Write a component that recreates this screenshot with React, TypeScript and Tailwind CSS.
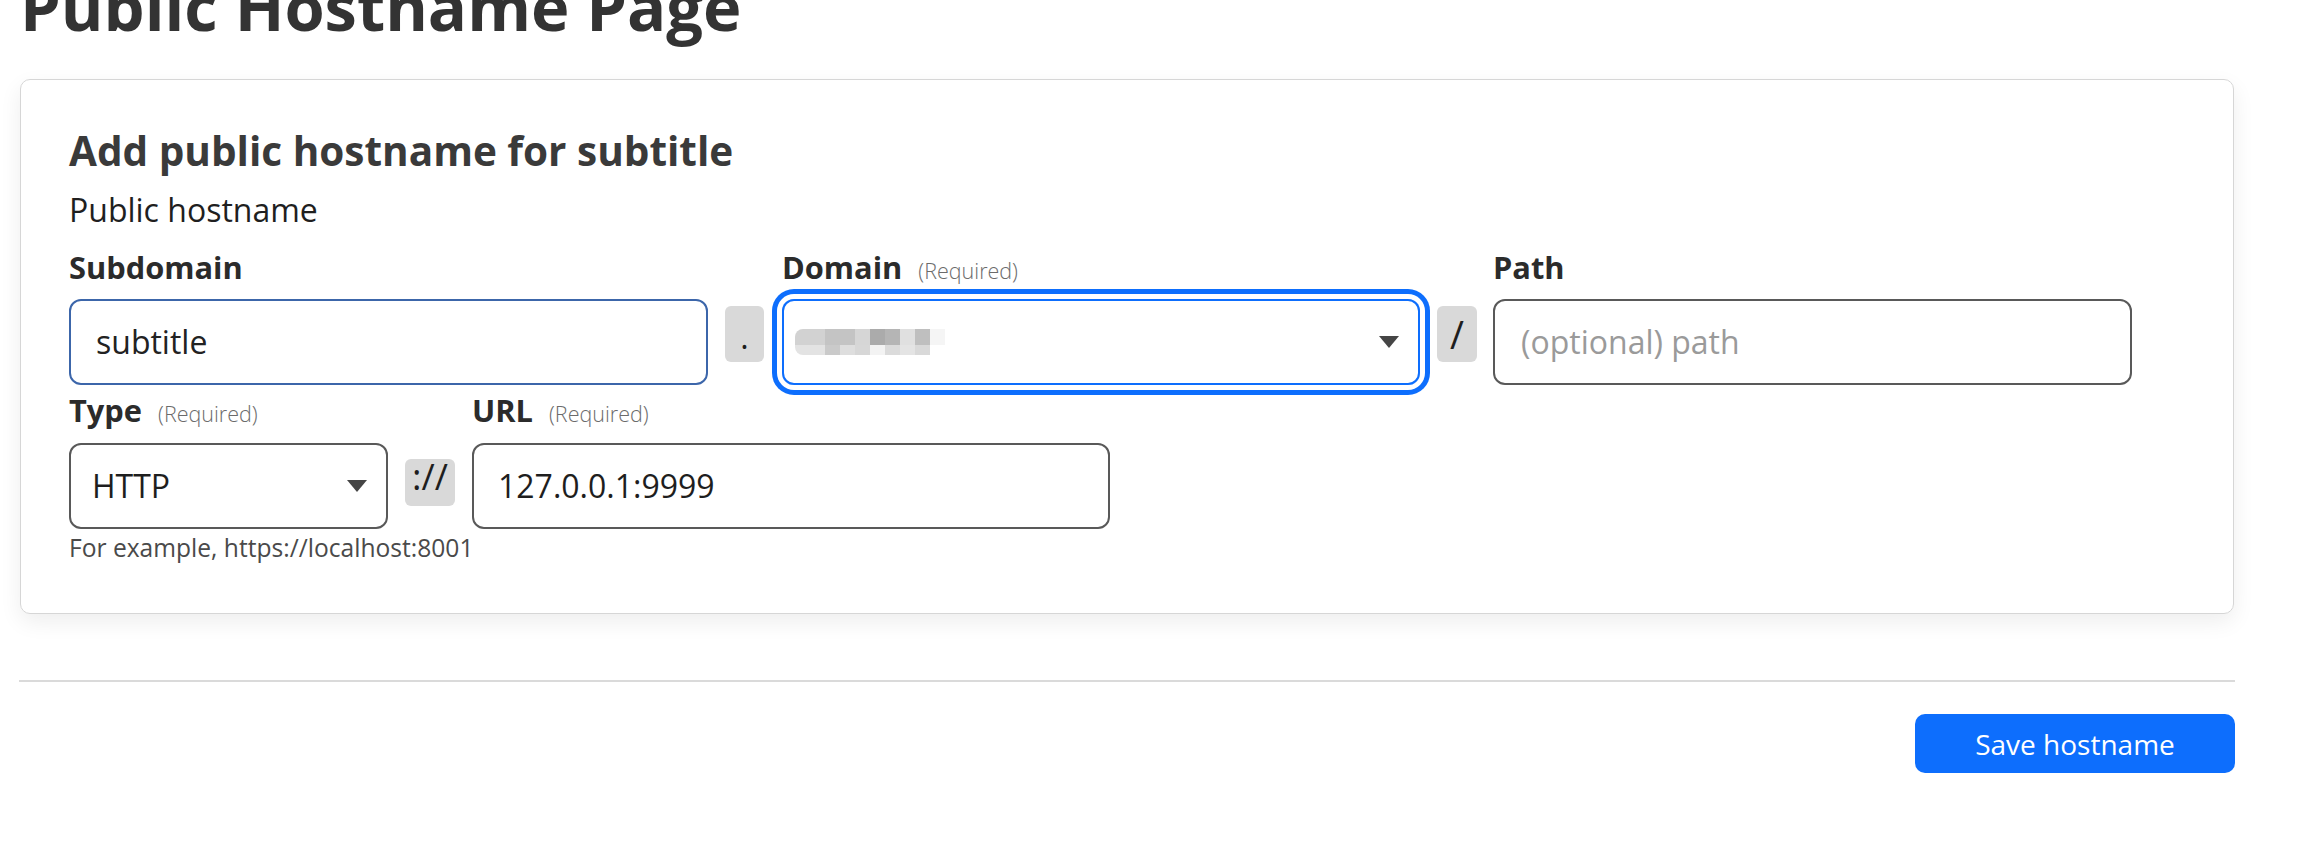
import React from "react";

// Hostname form — card with subdomain/domain/path row, type/url row, footer button

const caret = (
  <svg width="20" height="12" viewBox="0 0 20 12" className="shrink-0">
    <polygon points="0,0 20,0 10,12" fill="#454545" />
  </svg>
);

const mosaicTop = ["#d2d2d2", "#d2d2d2", "#c4c4c4", "#c4c4c4", "#d6d6d6", "#ababab", "#b5b5b5", "#e0e0e0", "#bfbfbf", "#f5f5f5"];
const mosaicBottom = ["#e3e3e3", "#e3e3e3", "#cacaca", "#dedede", "#d7d7d7", "#f3f3f3", "#dbdbdb", "#e4e4e4", "#d9d9d9"];

function Label({ text, required }: { text: string; required?: boolean }) {
  return (
    <div className="h-[44px] leading-[44px] whitespace-nowrap">
      <span className="text-[30.8px] font-bold text-[#2b2b2b]">{text}</span>
      {required && <span className="ml-4 text-[21.5px] font-light text-[#6b6b6b]">(Required)</span>}
    </div>
  );
}

function Sep({ children, className }: { children: React.ReactNode; className: string }) {
  return (
    <div className={"flex justify-center rounded-[6px] bg-[#d9d9d9] text-[#1e1e1e] " + className}>{children}</div>
  );
}

export default function App() {
  return (
    <div className="min-h-screen overflow-hidden bg-white font-['Open_Sans','Noto_Sans',sans-serif] text-[#212529]">
      <div className="ml-[20px] flex w-[2215px] flex-col">
        <h1 className="-mt-[26px] text-[65px] font-bold leading-[65px] text-[#333333]">Public Hostname Page</h1>

        <div className="mt-[40px] w-[2214px] rounded-[10px] border border-[#d6d6d6] px-[48px] pb-[49px] pt-[47px] shadow-[0_8px_22px_rgba(0,0,0,0.07)]">
          <h2 className="text-[40.5px] font-bold leading-[48px] text-[#3a3a3a]">Add public hostname for subtitle</h2>
          <div className="mt-[13px] text-[32px] leading-[44px] text-[#1f1f1f]">Public hostname</div>

          {/* hostname row */}
          <div className="mt-[13px] flex items-end">
            <div className="flex w-[639px] flex-col">
              <Label text="Subdomain" />
              <div className="mt-[10px] flex h-[86px] items-center rounded-[12px] border-2 border-[#3c66aa] pl-[25px] text-[32px] text-[#222]">
                subtitle
              </div>
            </div>
            <Sep className="mb-[23px] ml-[17px] mr-[18px] h-[56px] w-[39px] items-center text-[32px] leading-[56px]">
              <span className="pt-[6px]">.</span>
            </Sep>
            <div className="flex w-[638px] flex-col">
              <Label text="Domain" required />
              <div className="mt-[10px] flex h-[86px] items-center justify-between rounded-[12px] border-2 border-[#0d6efd] pl-[11px] pr-[19px] shadow-[0_0_0_5px_#fff,0_0_0_10px_#0d6efd]">
                <div className="flex flex-col">
                  <div className="flex">
                    {mosaicTop.map((c, i) => (
                      <div key={i} className={"h-[16px] w-[15px] " + (i === 0 ? "rounded-tl-[8px]" : "")} style={{ backgroundColor: c }} />
                    ))}
                  </div>
                  <div className="flex">
                    {mosaicBottom.map((c, i) => (
                      <div key={i} className={"h-[10px] w-[15px] " + (i === 0 ? "rounded-bl-[8px]" : "")} style={{ backgroundColor: c }} />
                    ))}
                  </div>
                </div>
                {caret}
              </div>
            </div>
            <Sep className="mb-[23px] ml-[17px] mr-[16px] h-[56px] w-[40px] items-center text-[38px] leading-[56px]">
              /
            </Sep>
            <div className="flex w-[639px] flex-col">
              <Label text="Path" />
              <div className="mt-[10px] flex h-[86px] items-center rounded-[12px] border-2 border-[#595959] pl-[26px] text-[32px] text-[#9a9a9a]">
                (optional) path
              </div>
            </div>
          </div>

          {/* service row */}
          <div className="mt-[3px] flex items-end">
            <div className="flex w-[319px] flex-col">
              <Label text="Type" required />
              <div className="mt-[11px] flex h-[86px] items-center justify-between rounded-[12px] border-2 border-[#595959] pl-[21px] pr-[19px] text-[32px] text-[#1e1e1e]">
                HTTP
                {caret}
              </div>
            </div>
            <Sep className="mx-[17px] mb-[23px] h-[47px] w-[50px] items-start pt-[1px] text-[36px] leading-[34px]">
              ://
            </Sep>
            <div className="flex w-[638px] flex-col">
              <Label text="URL" required />
              <div className="mt-[11px] flex h-[86px] items-center rounded-[12px] border-2 border-[#595959] pl-[24px] text-[32px] text-[#1e1e1e]">
                127.0.0.1:9999
              </div>
            </div>
          </div>
          <div className="mt-[3px] text-[24.6px] leading-[32px] text-[#4a4a4a]">For example, https://localhost:8001</div>
        </div>

        <div className="-ml-px mt-[66px] h-[2px] w-[2216px] bg-[#dadada]" />

        <button className="mt-[32px] flex h-[59px] w-[320px] items-center justify-center self-end rounded-[10px] bg-[#0d6efd] text-[28px] text-white">
          Save hostname
        </button>
      </div>
    </div>
  );
}
